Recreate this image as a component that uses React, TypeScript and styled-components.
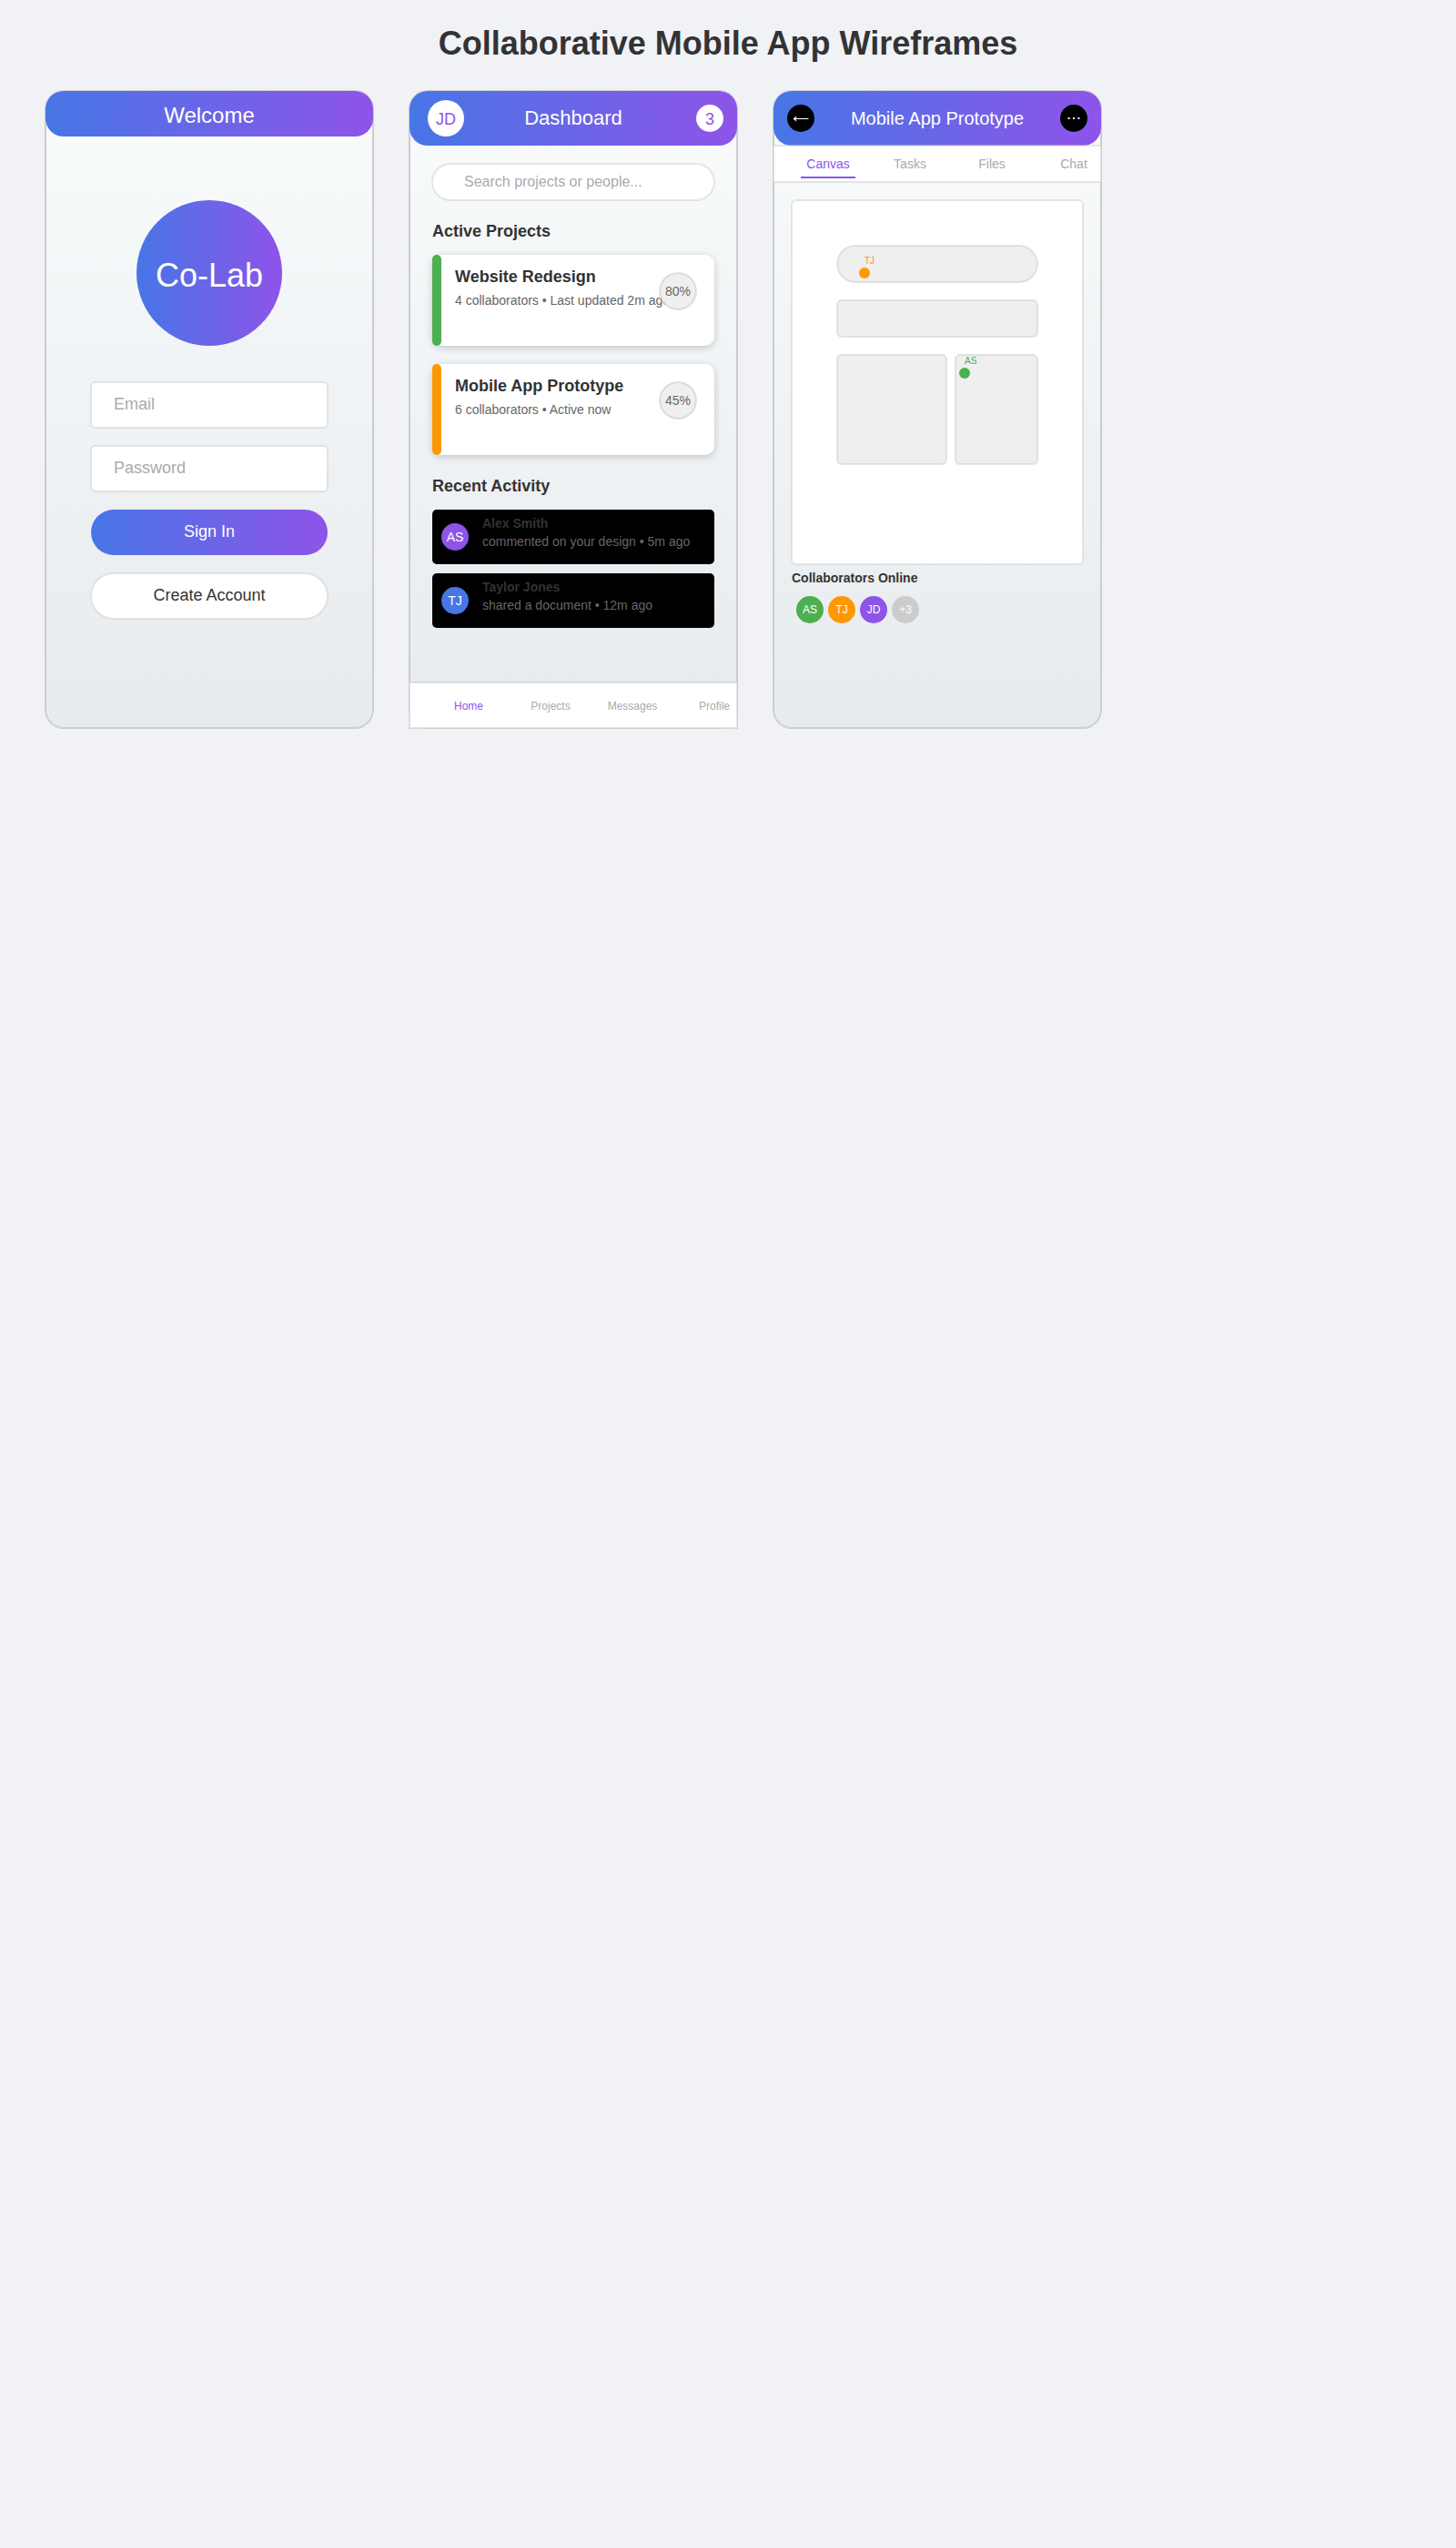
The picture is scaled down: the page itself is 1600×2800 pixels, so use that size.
import React from 'react';
import styled, { createGlobalStyle, css } from 'styled-components';

const color = {
  page: '#f0f2f6',
  ink: '#333333',
  muted: '#666666',
  faint: '#aaaaaa',
  line: '#cccccc',
  fill: '#efefef',
  blue: '#4776e6',
  purple: '#8e54e9',
  green: '#4caf50',
  orange: '#ff9800',
};

const brandGradient = `linear-gradient(90deg, ${color.blue}, ${color.purple})`;

/* A stroke centred on the edge of the box, half outside and half inside. */
const softStroke = css`
  box-shadow: 0 0 0 1px rgba(204, 204, 204, 0.5), inset 0 0 0 1px rgba(204, 204, 204, 0.5);
`;

const GlobalStyle = createGlobalStyle`
  *, *::before, *::after { box-sizing: border-box; }
  body {
    margin: 0;
    background: ${color.page};
    color: ${color.ink};
    font-family: "Liberation Sans", Arial, sans-serif;
  }
  h1, h2, h3, p, ul { margin: 0; padding: 0; }
  ul { list-style: none; }
  a { color: inherit; text-decoration: none; }
  button, input { font: inherit; color: inherit; border: 0; margin: 0; padding: 0; }
  button { cursor: pointer; }
`;

const Page = styled.main`
  padding: 24px 50px;
`;

const PageTitle = styled.h1`
  margin-bottom: 28px;
  font-size: 36px;
  line-height: 48px;
  text-align: center;
`;

const Phones = styled.div`
  display: flex;
  flex-wrap: wrap;
  gap: 40px;
`;

const Phone = styled.section`
  display: flex;
  flex-direction: column;
  flex: 0 1 360px;
  min-height: 700px;
  border-radius: 20px;
  background: linear-gradient(180deg, #f9fbfc, #e7ebee);
  box-shadow: 0 0 0 1px ${color.line}, inset 0 0 0 1px ${color.line};
`;

const WelcomeHeader = styled.header`
  padding: 12px 20px 8px;
  border-radius: 20px;
  background: ${brandGradient};
  color: #fff;
  text-align: center;
`;

const WelcomeTitle = styled.h2`
  font-size: 24px;
  font-weight: normal;
  line-height: 30px;
`;

const AppHeader = styled.header<{ $inset: number }>`
  display: grid;
  grid-template-columns: 40px 1fr ${(p) => p.$inset + 25}px;
  align-items: center;
  height: 60px;
  padding: 0 15px 0 ${(p) => p.$inset}px;
  border-radius: 20px;
  background: ${brandGradient};
  color: #fff;
`;

const AppTitle = styled.h2<{ $size: number }>`
  font-size: ${(p) => p.$size}px;
  font-weight: normal;
  line-height: 30px;
  text-align: center;
  white-space: nowrap;
`;

const Circle = styled.span<{ $size: number; $font: number; $bg: string; $ink?: string }>`
  display: flex;
  flex: none;
  align-items: center;
  justify-content: center;
  width: ${(p) => p.$size}px;
  height: ${(p) => p.$size}px;
  border-radius: 50%;
  background: ${(p) => p.$bg};
  color: ${(p) => p.$ink ?? '#fff'};
  font-size: ${(p) => p.$font}px;
  line-height: 20px;
`;

const HeaderBadge = styled(Circle)`
  padding-top: 2px;
`;

const EndBadge = styled(HeaderBadge)`
  justify-self: end;
`;

const IconButton = styled.button<{ $end?: boolean }>`
  display: flex;
  align-items: center;
  justify-content: center;
  justify-self: ${(p) => (p.$end ? 'end' : 'start')};
  width: 30px;
  height: 30px;
  border-radius: 50%;
  background: #000;
  color: #fff;
`;

const Logo = styled.div`
  display: flex;
  align-items: center;
  justify-content: center;
  width: 160px;
  height: 160px;
  margin: 70px auto 40px;
  padding-top: 6px;
  border-radius: 50%;
  background: ${brandGradient};
  color: #fff;
  font-size: 36px;
`;

const SignInForm = styled.form`
  display: flex;
  flex-direction: column;
  gap: 20px;
  padding: 0 50px;
`;

const Field = styled.input`
  width: 100%;
  height: 50px;
  padding: 0 25px 2px;
  border-radius: 5px;
  background: #fff;
  font-size: 18px;
  ${softStroke}
  &::placeholder { color: ${color.faint}; opacity: 1; }
`;

const PillButton = styled.button<{ $primary?: boolean }>`
  height: 50px;
  padding-bottom: 2px;
  border-radius: 25px;
  font-size: 18px;
  ${(p) =>
    p.$primary
      ? css`
          background: ${brandGradient};
          color: #fff;
        `
      : css`
          background: #fff;
          color: ${color.ink};
          ${softStroke}
        `}
`;

const DashboardBody = styled.div`
  padding: 20px 25px;
`;

const Search = styled.input`
  display: block;
  width: 100%;
  height: 40px;
  padding: 0 35px;
  border-radius: 20px;
  background: #fff;
  font-size: 16px;
  ${softStroke}
  &::placeholder { color: ${color.faint}; opacity: 1; }
`;

const SectionTitle = styled.h3`
  margin: 22px 0 14px;
  font-size: 18px;
  line-height: 24px;
`;

const Stack = styled.ul<{ $gap: number }>`
  display: flex;
  flex-direction: column;
  gap: ${(p) => p.$gap}px;
`;

const ProjectCard = styled.li`
  position: relative;
  display: flex;
  height: 100px;
  border-radius: 10px;
  background: #fff;
  box-shadow: 0 2px 8px rgba(0, 0, 0, 0.2);
`;

const Accent = styled.span<{ $color: string }>`
  flex: 0 0 10px;
  border-radius: 5px;
  background: ${(p) => p.$color};
`;

const ProjectText = styled.div`
  padding: 12px 0 0 15px;
  white-space: nowrap;
`;

const ProjectName = styled.h4`
  margin: 0 0 4px;
  font-size: 18px;
  line-height: 24px;
`;

const Meta = styled.p`
  color: ${color.muted};
  font-size: 14px;
  line-height: 20px;
`;

const Progress = styled(Circle)`
  position: absolute;
  top: 20px;
  right: 20px;
  box-shadow: 0 0 0 1px rgba(204, 204, 204, 0.5), inset 0 0 0 1px rgba(190, 190, 190, 0.5);
`;

const Activity = styled.li`
  display: flex;
  align-items: center;
  gap: 15px;
  height: 60px;
  padding: 0 10px;
  border-radius: 5px;
  background: #000;
`;

const ActivityText = styled.div`
  align-self: flex-start;
  padding-top: 5px;
  white-space: nowrap;
`;

const PersonName = styled.h4`
  margin: 0;
  font-size: 14px;
  line-height: 20px;
`;

const BottomNav = styled.nav`
  margin-top: auto;
  background: #fff;
  box-shadow: 0 0 0 1px rgba(204, 204, 204, 0.7), inset 0 0 0 1px rgba(204, 204, 204, 0.5);
`;

const TabBar = styled.nav`
  background: #fff;
  ${softStroke}
`;

const NavList = styled.ul<{ $shift: number }>`
  display: grid;
  grid-template-columns: repeat(4, 1fr);
  margin: 0 -${(p) => p.$shift}px 0 ${(p) => p.$shift}px;
`;

const NavItem = styled.li`
  display: flex;
  justify-content: center;
`;

const NavLink = styled.a<{ $active: boolean }>`
  padding-top: 2px;
  color: ${(p) => (p.$active ? color.purple : color.faint)};
  font-size: 12px;
  line-height: 48px;
`;

const TabLink = styled.a<{ $active: boolean }>`
  position: relative;
  width: 60px;
  color: ${(p) => (p.$active ? color.purple : color.faint)};
  font-size: 14px;
  line-height: 40px;
  text-align: center;
  &::after {
    content: '';
    display: ${(p) => (p.$active ? 'block' : 'none')};
    position: absolute;
    left: 0;
    right: 0;
    bottom: 4px;
    height: 2px;
    background: ${color.purple};
  }
`;

const PrototypeBody = styled.div`
  padding: 20px;
`;

const Canvas = styled.div`
  display: flex;
  flex-direction: column;
  gap: 20px;
  min-height: 400px;
  padding: 50px;
  border-radius: 5px;
  background: #fff;
  ${softStroke}
`;

const Block = styled.div<{ $height: number; $radius: number }>`
  position: relative;
  height: ${(p) => p.$height}px;
  border-radius: ${(p) => p.$radius}px;
  background: ${color.fill};
  ${softStroke}
`;

const BlockRow = styled.div`
  display: grid;
  grid-template-columns: 4fr 3fr;
  gap: 10px;
`;

/* A collaborator's live cursor, floating over the canvas. */
const Cursor = styled.span<{ $x: number; $y: number; $color: string }>`
  position: absolute;
  left: ${(p) => p.$x}px;
  top: ${(p) => p.$y}px;
  padding-left: 6px;
  color: ${(p) => p.$color};
  font-size: 10px;
  line-height: 12px;
  &::after {
    content: '';
    position: absolute;
    left: 0;
    top: 13px;
    width: 12px;
    height: 12px;
    border-radius: 50%;
    background: ${(p) => p.$color};
  }
`;

const OnlineTitle = styled.h3`
  margin: 5px 0 10px;
  font-size: 14px;
  line-height: 20px;
`;

const People = styled.ul`
  display: flex;
  gap: 5px;
  padding-left: 5px;
`;

const projects = [
  { name: 'Website Redesign', meta: '4 collaborators • Last updated 2m ago', progress: '80%', accent: color.green },
  { name: 'Mobile App Prototype', meta: '6 collaborators • Active now', progress: '45%', accent: color.orange },
];

const activity = [
  { initials: 'AS', name: 'Alex Smith', text: 'commented on your design • 5m ago', bg: color.purple },
  { initials: 'TJ', name: 'Taylor Jones', text: 'shared a document • 12m ago', bg: color.blue },
];

const online = [
  { label: 'AS', bg: color.green },
  { label: 'TJ', bg: color.orange },
  { label: 'JD', bg: color.purple },
  { label: '+3', bg: color.line },
];

function BackIcon() {
  return (
    <svg width="18" height="18" viewBox="0 0 18 18" fill="none" aria-hidden="true">
      <path d="M2 9.5H17.5" stroke="currentColor" strokeWidth="1" />
      <path d="M0.6 9.5 4.4 6.2 3.6 9.5 4.4 12.8Z" fill="currentColor" />
    </svg>
  );
}

function MoreIcon() {
  return (
    <svg width="18" height="18" viewBox="0 0 18 18" fill="currentColor" aria-hidden="true">
      <rect x="2.6" y="8" width="2" height="2" />
      <rect x="8" y="8" width="2" height="2" />
      <rect x="13.4" y="8" width="2" height="2" />
    </svg>
  );
}

function WelcomeScreen() {
  return (
    <Phone>
      <WelcomeHeader>
        <WelcomeTitle>Welcome</WelcomeTitle>
      </WelcomeHeader>
      <Logo>Co-Lab</Logo>
      <SignInForm onSubmit={(e) => e.preventDefault()}>
        <Field type="email" placeholder="Email" aria-label="Email" />
        <Field type="password" placeholder="Password" aria-label="Password" />
        <PillButton type="submit" $primary>Sign In</PillButton>
        <PillButton type="button">Create Account</PillButton>
      </SignInForm>
    </Phone>
  );
}

function DashboardScreen() {
  return (
    <Phone>
      <AppHeader $inset={20}>
        <HeaderBadge $size={40} $font={18} $bg="#fff" $ink={color.purple}>JD</HeaderBadge>
        <AppTitle $size={22}>Dashboard</AppTitle>
        <EndBadge $size={30} $font={18} $bg="#fff" $ink={color.purple}>3</EndBadge>
      </AppHeader>
      <DashboardBody>
        <Search type="search" placeholder="Search projects or people..." aria-label="Search projects or people" />
        <SectionTitle>Active Projects</SectionTitle>
        <Stack $gap={20}>
          {projects.map((p) => (
            <ProjectCard key={p.name}>
              <Accent $color={p.accent} />
              <ProjectText>
                <ProjectName>{p.name}</ProjectName>
                <Meta>{p.meta}</Meta>
              </ProjectText>
              <Progress $size={40} $font={14} $bg={color.fill} $ink={color.muted}>{p.progress}</Progress>
            </ProjectCard>
          ))}
        </Stack>
        <SectionTitle>Recent Activity</SectionTitle>
        <Stack $gap={10}>
          {activity.map((a) => (
            <Activity key={a.name}>
              <Circle $size={30} $font={14} $bg={a.bg}>{a.initials}</Circle>
              <ActivityText>
                <PersonName>{a.name}</PersonName>
                <Meta>{a.text}</Meta>
              </ActivityText>
            </Activity>
          ))}
        </Stack>
      </DashboardBody>
      <BottomNav aria-label="Main">
        <NavList $shift={20}>
          {['Home', 'Projects', 'Messages', 'Profile'].map((label, i) => (
            <NavItem key={label}>
              <NavLink href={`#${label.toLowerCase()}`} $active={i === 0}>{label}</NavLink>
            </NavItem>
          ))}
        </NavList>
      </BottomNav>
    </Phone>
  );
}

function PrototypeScreen() {
  return (
    <Phone>
      <AppHeader $inset={15}>
        <IconButton type="button" aria-label="Back"><BackIcon /></IconButton>
        <AppTitle $size={20}>Mobile App Prototype</AppTitle>
        <IconButton type="button" aria-label="More" $end><MoreIcon /></IconButton>
      </AppHeader>
      <TabBar aria-label="Project">
        <NavList $shift={15}>
          {['Canvas', 'Tasks', 'Files', 'Chat'].map((label, i) => (
            <NavItem key={label}>
              <TabLink href={`#${label.toLowerCase()}`} $active={i === 0}>{label}</TabLink>
            </NavItem>
          ))}
        </NavList>
      </TabBar>
      <PrototypeBody>
        <Canvas>
          <Block $height={40} $radius={20}>
            <Cursor $x={24} $y={11} $color={color.orange}>TJ</Cursor>
          </Block>
          <Block $height={40} $radius={5} />
          <BlockRow>
            <Block $height={120} $radius={5} />
            <Block $height={120} $radius={5}>
              <Cursor $x={4} $y={1} $color={color.green}>AS</Cursor>
            </Block>
          </BlockRow>
        </Canvas>
        <OnlineTitle>Collaborators Online</OnlineTitle>
        <People>
          {online.map((p) => (
            <li key={p.label}>
              <Circle $size={30} $font={12} $bg={p.bg}>{p.label}</Circle>
            </li>
          ))}
        </People>
      </PrototypeBody>
    </Phone>
  );
}

export default function App() {
  return (
    <>
      <GlobalStyle />
      <Page>
        <PageTitle>Collaborative Mobile App Wireframes</PageTitle>
        <Phones>
          <WelcomeScreen />
          <DashboardScreen />
          <PrototypeScreen />
        </Phones>
      </Page>
    </>
  );
}
